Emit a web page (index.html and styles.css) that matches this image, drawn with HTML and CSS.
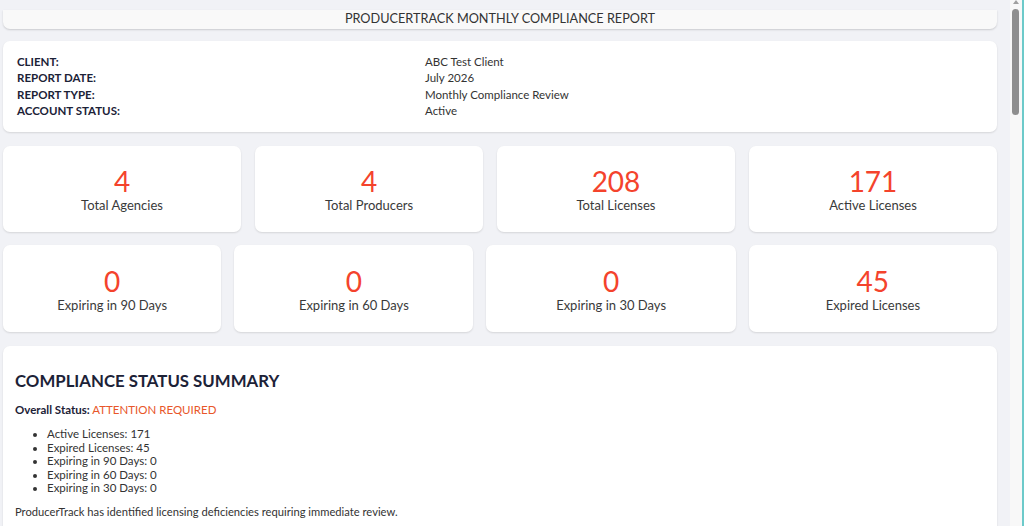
FILE: index.html
```html
<!DOCTYPE html>
<html lang="en">
<head>
<meta charset="utf-8">
<title>ProducerTrack Monthly Compliance Report</title>
<link rel="stylesheet" href="styles.css">
</head>
<body>
<div class="shell">
  <main class="page">
    <header class="titlebar">PRODUCERTRACK MONTHLY COMPLIANCE REPORT</header>

    <section class="card info">
      <div class="info-row"><span class="lbl">CLIENT:</span><span class="val">ABC Test Client</span></div>
      <div class="info-row"><span class="lbl">REPORT DATE:</span><span class="val">July 2026</span></div>
      <div class="info-row"><span class="lbl">REPORT TYPE:</span><span class="val">Monthly Compliance Review</span></div>
      <div class="info-row"><span class="lbl">ACCOUNT STATUS:</span><span class="val">Active</span></div>
    </section>

    <section class="stats stats-a">
      <div class="card stat"><div class="num">4</div><div class="cap">Total Agencies</div></div>
      <div class="card stat"><div class="num">4</div><div class="cap">Total Producers</div></div>
      <div class="card stat"><div class="num">208</div><div class="cap">Total Licenses</div></div>
      <div class="card stat"><div class="num">171</div><div class="cap">Active Licenses</div></div>
    </section>

    <section class="stats stats-b">
      <div class="card stat"><div class="num">0</div><div class="cap">Expiring in 90 Days</div></div>
      <div class="card stat"><div class="num">0</div><div class="cap">Expiring in 60 Days</div></div>
      <div class="card stat"><div class="num">0</div><div class="cap">Expiring in 30 Days</div></div>
      <div class="card stat"><div class="num">45</div><div class="cap">Expired Licenses</div></div>
    </section>

    <section class="card summary">
      <h2>COMPLIANCE STATUS SUMMARY</h2>
      <p class="overall"><strong>Overall Status:</strong> <span class="alert">ATTENTION REQUIRED</span></p>
      <ul class="bullets">
        <li>Active Licenses: 171</li>
        <li>Expired Licenses: 45</li>
        <li>Expiring in 90 Days: 0</li>
        <li>Expiring in 60 Days: 0</li>
        <li>Expiring in 30 Days: 0</li>
      </ul>
      <p class="note">ProducerTrack has identified licensing deficiencies requiring immediate review.</p>
    </section>
  </main>
  <div class="scrollbar">
    <div class="sb-arrow"></div>
    <div class="sb-thumb"></div>
  </div>
  <div class="edge"></div>
</div>
</body>
</html>
```

FILE: styles.css
```css
* { box-sizing: border-box; }

html, body {
  margin: 0;
  height: 100%;
  overflow: hidden;
}

body {
  background: #f1f2f6;
  font-family: Lato, "Open Sans", sans-serif;
  color: #333;
}

.shell {
  display: flex;
  height: 526px;
}

.page {
  flex: 1;
  padding: 10px 13px 0 3px;
  overflow: hidden;
}

.titlebar {
  height: 19px;
  background: #f9f9f9;
  border-radius: 0 0 7px 7px;
  box-shadow: 0 1px 2px rgba(0, 0, 0, 0.16);
  text-align: center;
  font-size: 12.7px;
  line-height: 16px;
  color: #333;
}

.card {
  background: #fff;
  border-radius: 7px;
  box-shadow: 0 1px 2px rgba(0, 0, 0, 0.12);
}

.info {
  margin-top: 12px;
  height: 91px;
  padding: 13px 14px;
}

.info-row {
  display: grid;
  grid-template-columns: 408px 1fr;
  font-size: 11.5px;
  line-height: 16.4px;
}

.lbl {
  font-weight: 700;
  color: #1c2237;
}

.val { color: #333; }

.stats {
  display: grid;
  margin-top: 14px;
}

.stats-a {
  grid-template-columns: 238fr 228fr 238fr 248fr;
  column-gap: 14px;
}

.stats-b {
  margin-top: 13px;
  grid-template-columns: 218fr 239fr 249fr 248fr;
  column-gap: 13px;
}

.stat {
  height: 86px;
  padding-top: 19px;
  text-align: center;
}

.stats-b .stat { height: 87px; padding-top: 20px; }

.num {
  font-size: 28px;
  line-height: 32px;
  color: #f4432c;
}

.cap {
  font-size: 13px;
  line-height: 16px;
  color: #3a3a3a;
}

.summary {
  margin-top: 14px;
  height: 300px;
  padding: 24px 12px 0 12px;
  border-radius: 7px 7px 0 0;
}

.summary h2 {
  margin: 0;
  font-size: 16.8px;
  line-height: 22px;
  font-weight: 700;
  color: #1c2237;
}

.overall {
  margin: 11px 0 0;
  font-size: 11.5px;
  line-height: 14px;
  color: #333;
}

.overall strong { color: #1c2237; }

.alert { color: #e8562a; }

.bullets {
  margin: 10px 0 0;
  padding-left: 32px;
  font-size: 11.5px;
  line-height: 13.5px;
  color: #333;
}

.note {
  margin: 10px 0 0;
  font-size: 11.2px;
  line-height: 14px;
  color: #333;
}

.scrollbar {
  width: 12px;
  background: #f8f8f8;
  position: relative;
  flex: none;
}

.sb-arrow {
  position: absolute;
  top: 0;
  left: 3px;
  width: 0;
  height: 0;
  border-left: 3px solid transparent;
  border-right: 3px solid transparent;
  border-bottom: 4px solid #a0a0a0;
}

.sb-thumb {
  position: absolute;
  top: 9px;
  left: 2px;
  width: 7px;
  height: 106px;
  border-radius: 4px;
  background: #8f8f8f;
}

.edge {
  width: 2px;
  background: #6ccaca;
  flex: none;
}
```
